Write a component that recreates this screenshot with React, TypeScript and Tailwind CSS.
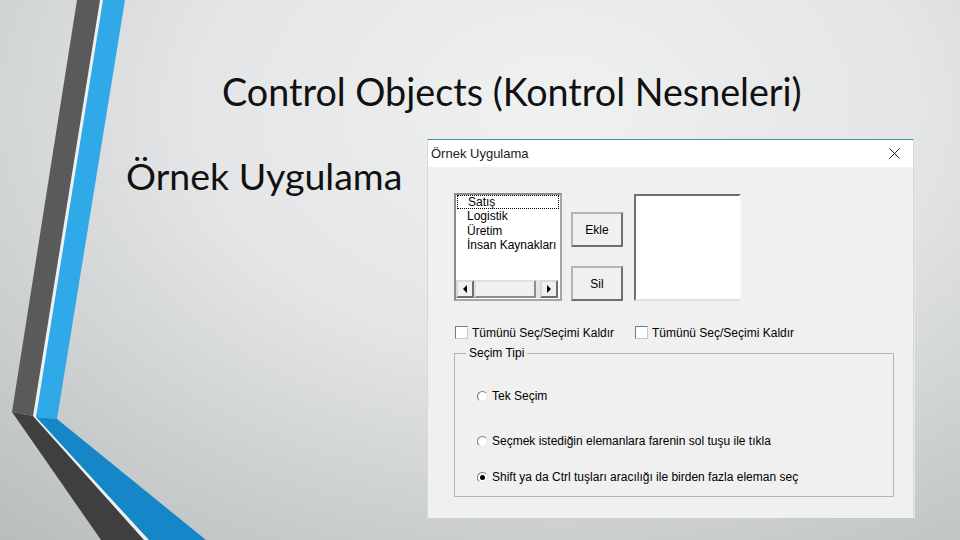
import React from "react";

const dlgFont = { fontFamily: '"Liberation Sans", Arial, sans-serif' };
const slideFont = { fontFamily: 'Lato, "Open Sans", sans-serif' };

function Decoration() {
  return (
    <svg className="absolute inset-0 pointer-events-none" width="960" height="540" viewBox="0 0 960 540">
      {/* light seam between the two bands */}
      <polygon points="98,0 105,0 38,418 150,540 141,540 31,416" fill="#eef1f2" />
      <polygon points="77,0 100,0 33,416 12,412" fill="#5a5a5a" />
      <polygon points="12,412 33,416 144,540 101,540" fill="#3f3f3f" />
      <polygon points="103,0 125,0 57,419 36,417" fill="#30a9e9" />
      <polygon points="36,417 57,419 206,540 149,540" fill="#1587c8" />
    </svg>
  );
}

function Button({ label }: { label: string }) {
  return (
    <div className="w-[52px] h-[35px] flex items-center justify-center bg-[#f0f0f0] border-2 border-t-[#b4b4b4] border-l-[#b4b4b4] border-b-[#6e6e6e] border-r-[#6e6e6e] text-[12px] text-black">
      {label}
    </div>
  );
}

function ScrollBtn({ dir }: { dir: "l" | "r" }) {
  return (
    <div className="w-[18px] h-[18px] flex items-center justify-center bg-[#f0f0f0] border-2 border-t-[#d8d8d8] border-l-[#d8d8d8] border-b-[#6e6e6e] border-r-[#6e6e6e]">
      <svg width="6" height="8" viewBox="0 0 6 8">
        {dir === "l" ? <polygon points="5,0 5,8 1,4" fill="#000" /> : <polygon points="1,0 1,8 5,4" fill="#000" />}
      </svg>
    </div>
  );
}

function Checkbox({ label }: { label: string }) {
  return (
    <div className="flex items-center">
      <div className="w-[13px] h-[13px] bg-white border border-t-[#7a7a7a] border-l-[#7a7a7a] border-b-[#c8c8c8] border-r-[#c8c8c8]" />
      <span className="ml-[4px] text-[12px] text-black leading-none">{label}</span>
    </div>
  );
}

function Radio({ label, checked }: { label: string; checked?: boolean }) {
  return (
    <div className="flex items-center">
      <div className="w-[11px] h-[11px] rounded-full bg-white border border-t-[#7a7a7a] border-l-[#7a7a7a] border-b-[#e6e6e6] border-r-[#e6e6e6] flex items-center justify-center">
        {checked && <div className="w-[5px] h-[5px] rounded-full bg-black" />}
      </div>
      <span className="ml-[4px] text-[12px] text-black leading-none">{label}</span>
    </div>
  );
}

function Dialog() {
  const items = ["Satış", "Logistik", "Üretim", "İnsan Kaynakları"];
  return (
    <div style={dlgFont} className="w-[487px] h-[379px] flex flex-col border-t border-[#3d8fad] border-x border-x-[#d6d8d9] shadow-[1px_0_0_#e4e6e7]">
      <div className="h-[27px] bg-white flex items-center justify-between pl-[3px] pr-[13px]">
        <span className="text-[13px] text-[#222] leading-none">Örnek Uygulama</span>
        <svg width="11" height="11" viewBox="0 0 11 11">
          <path d="M0.5 0.5 L10.5 10.5 M10.5 0.5 L0.5 10.5" stroke="#222" strokeWidth="1" />
        </svg>
      </div>
      <div className="flex-1 bg-[#f0f0f0] pl-[26px] pt-[26px]">
        <div className="flex items-start">
          {/* left list */}
          <div className="w-[108px] h-[108px] bg-white border-2 border-t-[#8c8c8c] border-l-[#8c8c8c] border-b-[#a6a6a6] border-r-[#a6a6a6] flex flex-col">
            <div className="flex-1">
              {items.map((it, i) => (
                <div
                  key={it}
                  className={
                    i === 0
                      ? "h-[14px] ml-[1px] mr-[1px] border border-dotted border-black pl-[10px] text-[12px] leading-[12px] text-black"
                      : "h-[14.5px] pl-[11px] text-[12px] leading-[14px] text-black"
                  }
                >
                  {it}
                </div>
              ))}
            </div>
            <div className="h-[20px] flex items-center pb-[1px]">
              <ScrollBtn dir="l" />
              <div className="w-[62px] h-[18px] bg-[#f0f0f0] border-2 border-t-[#e0e0e0] border-l-[#e0e0e0] border-b-[#8c8c8c] border-r-[#8c8c8c]" />
              <div className="w-[4px] h-[18px] bg-[#e4e4e4]" />
              <ScrollBtn dir="r" />
            </div>
          </div>
          {/* buttons */}
          <div className="ml-[9px] pt-[19px] flex flex-col gap-[19px]">
            <Button label="Ekle" />
            <Button label="Sil" />
          </div>
          {/* right list */}
          <div className="ml-[11px] mt-[1px] w-[107px] h-[107px] bg-white border-2 border-t-[#6f6f6f] border-l-[#6f6f6f] border-b-[#e2e2e2] border-r-[#fafafa]" />
        </div>
        <div className="mt-[25px] ml-[1px] flex items-center">
          <div className="w-[180px]">
            <Checkbox label="Tümünü Seç/Seçimi Kaldır" />
          </div>
          <Checkbox label="Tümünü Seç/Seçimi Kaldır" />
        </div>
        <fieldset className="mt-[6px] w-[440px] h-[152px] border border-[#b4b4b4] m-0 p-0">
          <legend className="ml-[11px] px-[3px] text-[12px] text-black leading-[16px]">Seçim Tipi</legend>
          <div className="pl-[22px] pt-[29px] flex flex-col">
            <Radio label="Tek Seçim" />
            <div className="h-[33px]" />
            <Radio label="Seçmek istediğin elemanlara farenin sol tuşu ile tıkla" />
            <div className="h-[24px]" />
            <Radio label="Shift ya da Ctrl tuşları aracılığı ile birden fazla eleman seç" checked />
          </div>
        </fieldset>
      </div>
    </div>
  );
}

export default function App() {
  return (
    <div className="relative w-[960px] h-[540px] overflow-hidden bg-[radial-gradient(ellipse_95%_115%_at_58%_20%,#f0f1f1_0%,#e3e5e6_40%,#c7cacb_75%,#b3b7b8_100%)]">
      <Decoration />
      <div className="relative flex flex-col">
        <div style={slideFont} className="h-[139px] pl-[222px] pt-[72px] text-[37.7px] leading-[40px] text-[#111]">
          Control Objects (Kontrol Nesneleri)
        </div>
        <div className="flex">
          <div style={slideFont} className="w-[427px] pl-[126px] pt-[17px] text-[37.5px] leading-[40px] text-[#111] whitespace-nowrap">
            Örnek Uygulama
          </div>
          <Dialog />
        </div>
      </div>
    </div>
  );
}
